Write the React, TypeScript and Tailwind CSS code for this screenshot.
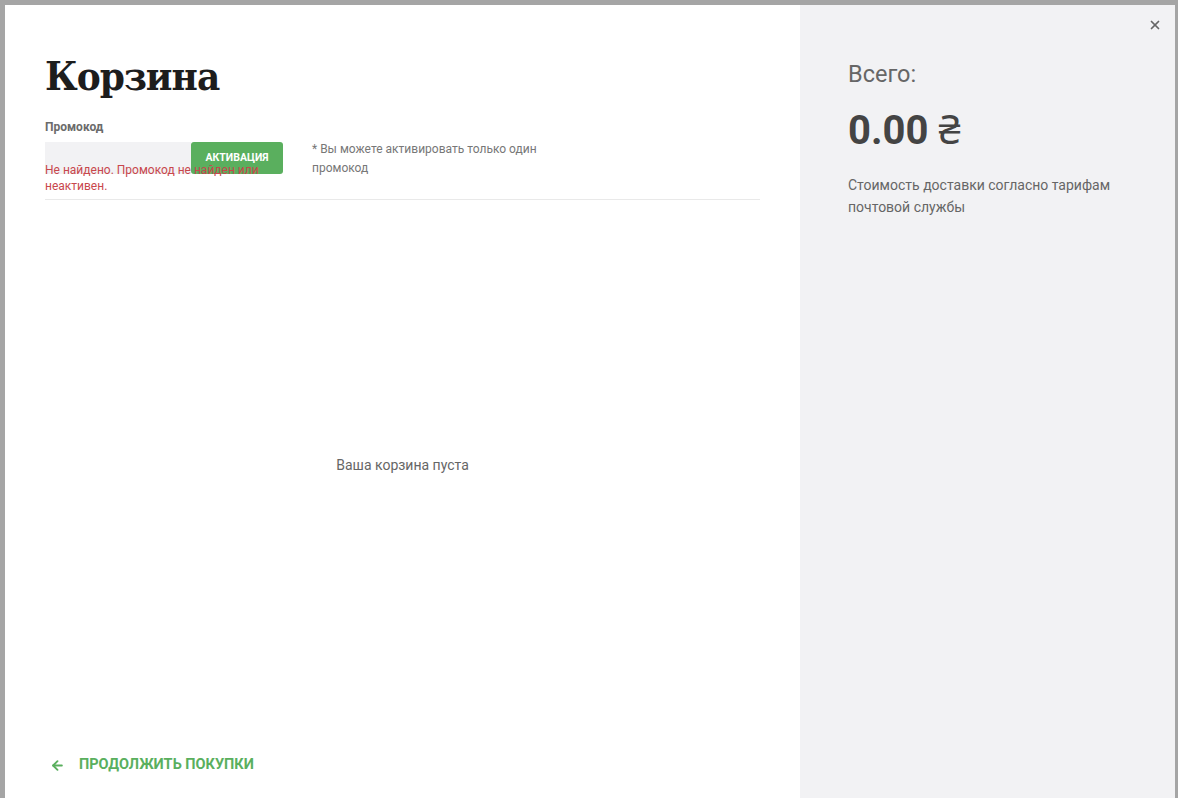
import { X, ArrowLeft } from 'lucide-react';

// Cart modal — empty state with promo code error.

function PromoForm() {
  return (
    <div className="mt-[19px]">
      <div className="text-[12px] font-bold text-[#6b6b6b] leading-[16px]">Промокод</div>
      <div className="mt-[7px] flex items-start">
        <div className="relative w-[238px] shrink-0">
          <div className="flex h-[32px]">
            <input
              className="h-full w-[146px] bg-[#f2f2f4] px-3 text-[13px] outline-none"
              aria-label="Промокод"
            />
            <button className="h-full w-[92px] rounded-[3px] bg-[#5aaf5e] text-[10.5px] font-bold text-white">
              АКТИВАЦИЯ
            </button>
          </div>
          <p className="absolute left-0 top-[20px] w-[238px] text-[12px] leading-[16px] text-[#c8474c]">
            Не найдено. Промокод не найден или неактивен.
          </p>
        </div>
        <p className="ml-[29px] mt-[-2px] w-[250px] text-[12px] leading-[19px] text-[#777]">
          * Вы можете активировать только один промокод
        </p>
      </div>
    </div>
  );
}

export default function App() {
  return (
    <div
      className="flex h-screen w-full border-t-[5px] border-l-[5px] border-r-[3px] border-[#a5a5a5] bg-white"
      style={{ fontFamily: 'Roboto, "Noto Sans", sans-serif' }}
    >
      <div className="flex w-[795px] shrink-0 flex-col px-10">
        <h1
          className="mt-[47px] text-[40px] font-bold leading-[48px] tracking-[-1px] text-[#1d1d1d] font-stretch-condensed"
          style={{ fontFamily: '"DejaVu Serif Condensed", "DejaVu Serif", serif' }}
        >
          Корзина
        </h1>
        <PromoForm />
        <div className="mt-[21px] h-px bg-[#e9e9e9]" />
        <div className="flex flex-1 items-center justify-center pb-[24px] text-[14px] text-[#666]">
          Ваша корзина пуста
        </div>
        <a className="mb-[22px] ml-[5px] flex items-center gap-[14px] text-[14.5px] font-bold text-[#5aaf5e]">
          <ArrowLeft size={15} strokeWidth={3} />
          ПРОДОЛЖИТЬ ПОКУПКИ
        </a>
      </div>
      <div className="relative flex-1 bg-[#f2f2f4] pl-[48px]">
        <button className="absolute right-[13px] top-[13px] text-[#666]" aria-label="Закрыть">
          <X size={14} strokeWidth={3} />
        </button>
        <div className="mt-[54px] text-[23.5px] leading-[30px] text-[#666]">Всего:</div>
        <div className="mt-[18px] text-[40px] font-bold leading-[48px] text-[#444]">
          0.00 <span className="font-normal">₴</span>
        </div>
        <p className="mt-[19px] w-[280px] text-[14px] leading-[22px] text-[#666]">
          Стоимость доставки согласно тарифам почтовой службы
        </p>
      </div>
    </div>
  );
}
